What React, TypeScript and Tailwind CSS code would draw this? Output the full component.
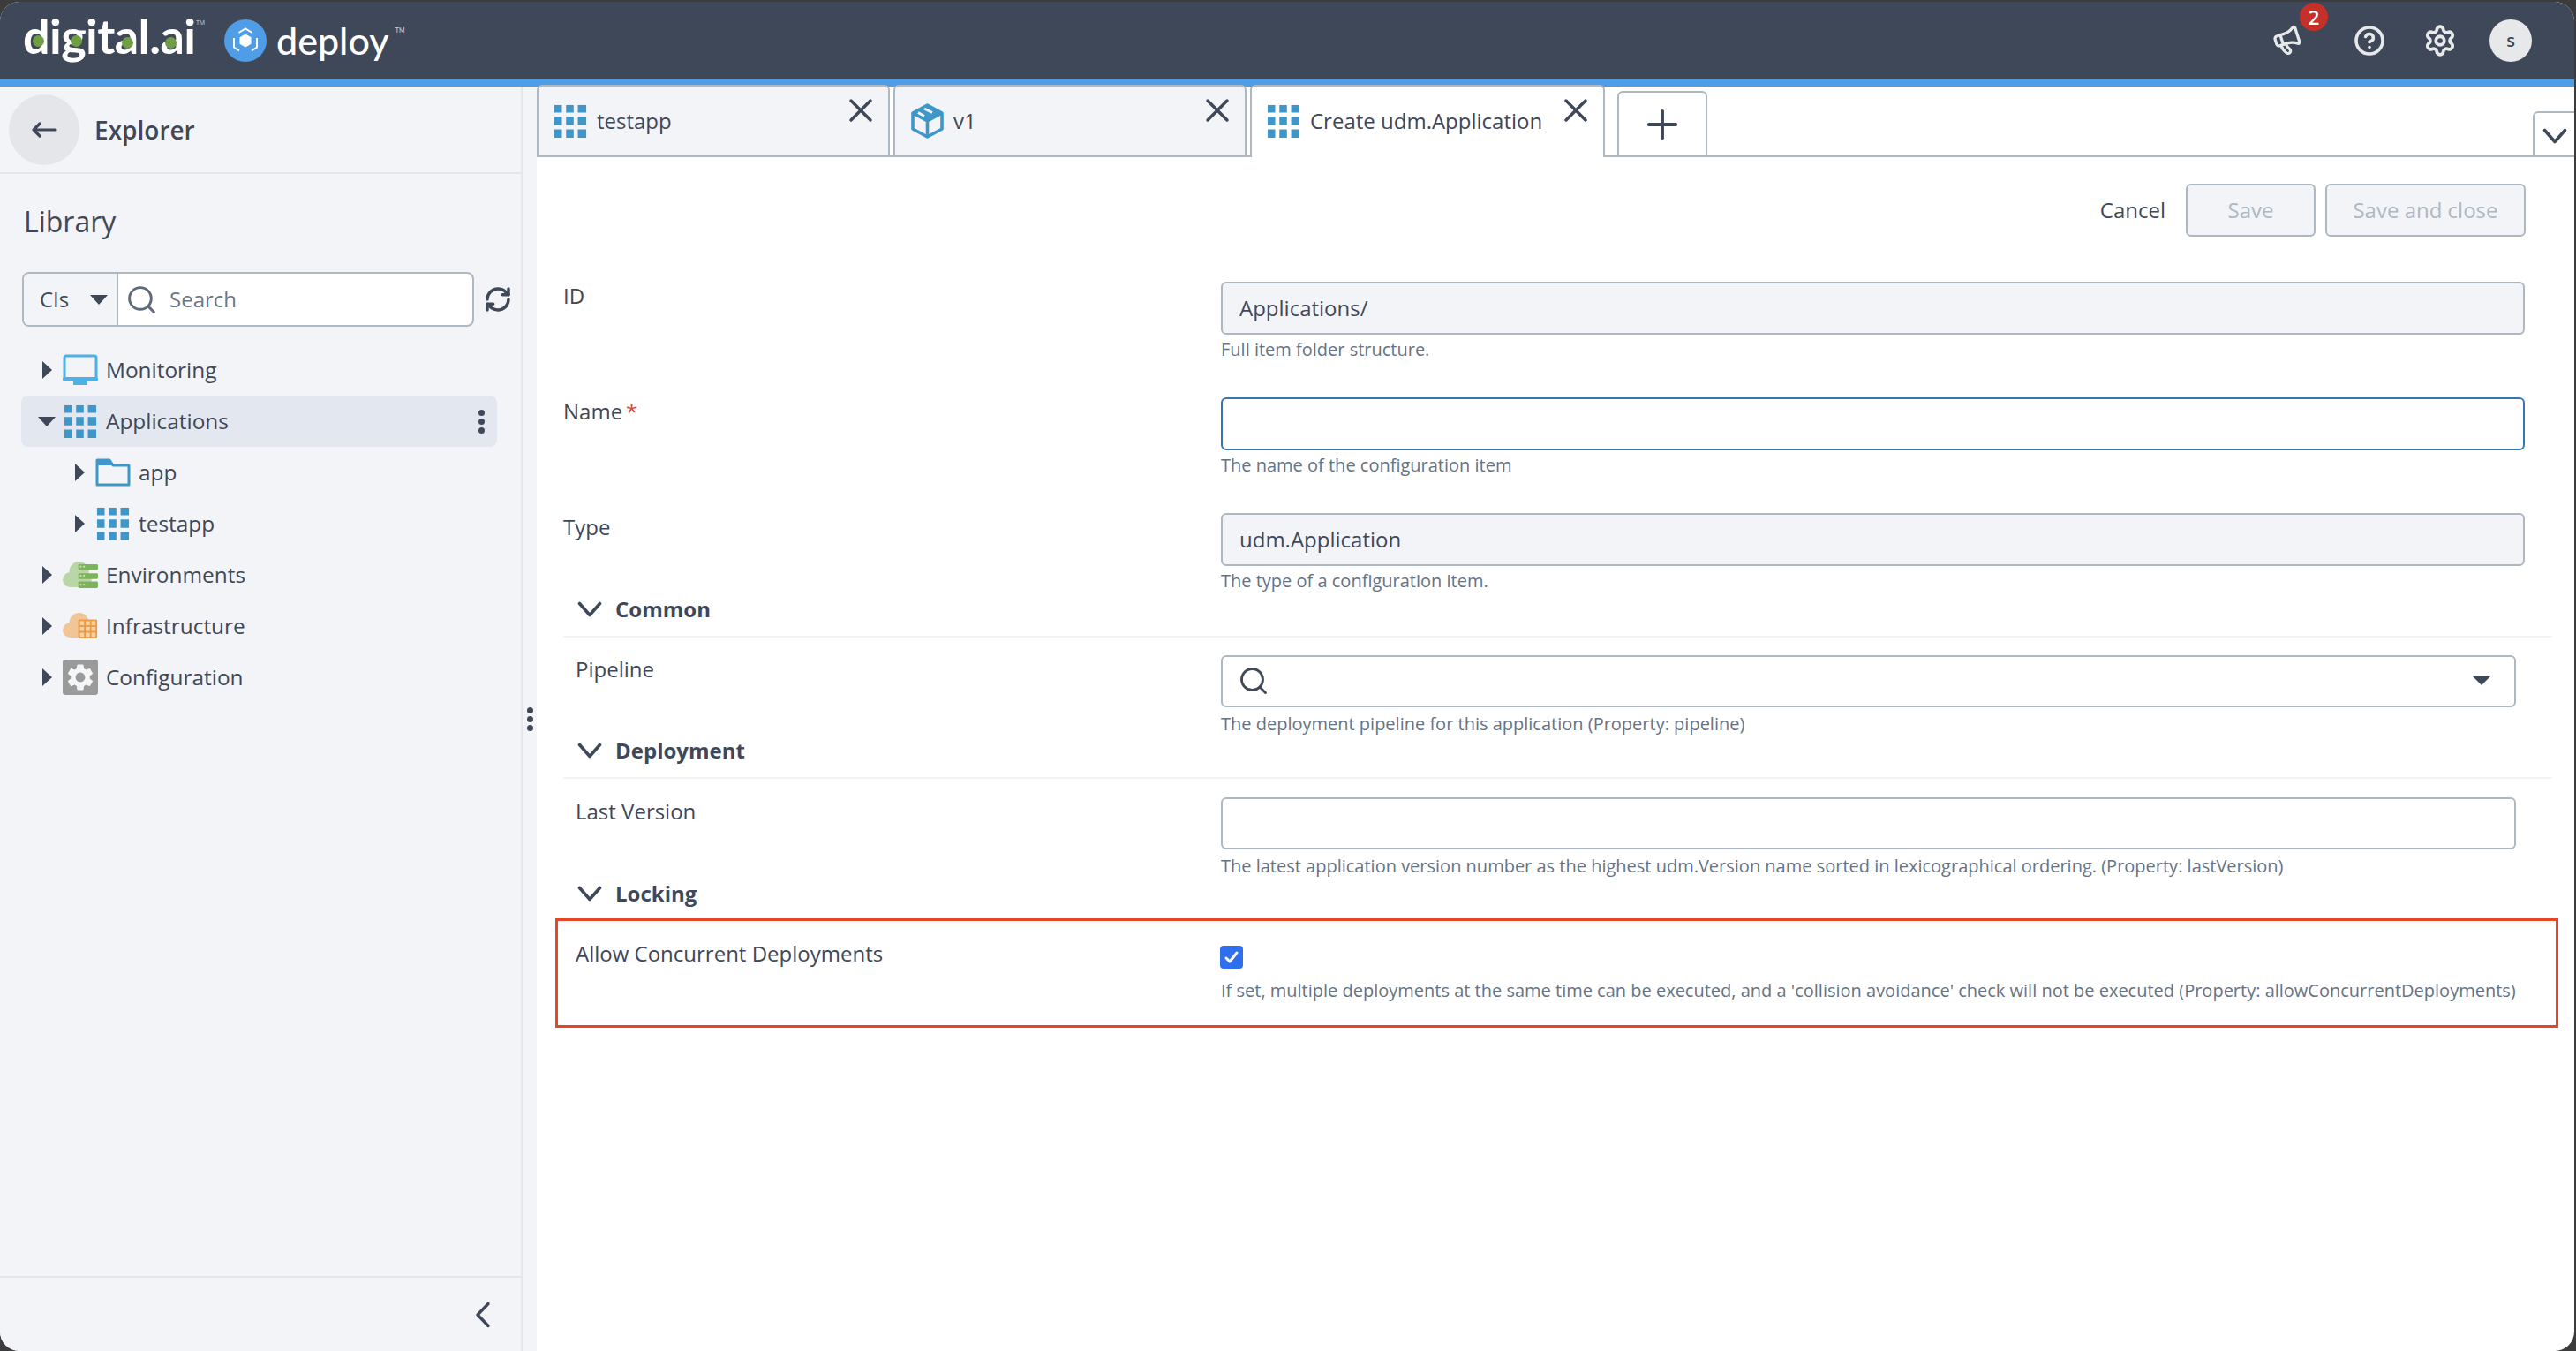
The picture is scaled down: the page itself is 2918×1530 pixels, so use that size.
import { CircleHelp, Megaphone, Plus, RefreshCw, Search, Settings, X } from 'lucide-react';
import { MdSettings } from 'react-icons/md';

const Grid = ({ className = '' }: { className?: string }) => (
  <svg viewBox="0 0 40 40" className={className}>
    <g fill="#3f96c8">
      <rect x="1" y="1" width="9" height="9" /><rect x="15" y="1" width="9" height="9" /><rect x="29" y="1" width="10" height="9" />
      <rect x="1" y="15" width="9" height="10" /><rect x="15" y="15" width="9" height="10" /><rect x="29" y="15" width="10" height="10" />
      <rect x="1" y="30" width="9" height="10" /><rect x="15" y="30" width="9" height="10" /><rect x="29" y="30" width="10" height="10" />
    </g>
  </svg>
);

const Caret = ({ open = false }: { open?: boolean }) =>
  open ? (
    <div className="h-0 w-0 border-x-[10px] border-t-[11px] border-x-transparent border-t-[#3f4859]" />
  ) : (
    <div className="h-0 w-0 border-y-[10px] border-l-[11px] border-y-transparent border-l-[#3f4859]" />
  );

const Chevron = ({ className = '' }: { className?: string }) => (
  <svg viewBox="0 0 28 18" className={`h-[18px] w-[28px] shrink-0 ${className}`} fill="none" stroke="#3f4859" strokeWidth="3.6" strokeLinecap="round" strokeLinejoin="round">
    <path d="M2.5 2.5 14 15.5 25.5 2.5" />
  </svg>
);

const MonitorIcon = () => (
  <svg viewBox="0 0 40 36" className="h-[36px] w-[40px]">
    <rect x="2" y="2" width="36" height="27" rx="2" fill="none" stroke="#4fb0e5" strokeWidth="3" />
    <rect x="0" y="26" width="40" height="5" rx="2" fill="#4fb0e5" />
    <rect x="12" y="31" width="16" height="4" fill="#4fb0e5" />
  </svg>
);

const FolderIcon = () => (
  <svg viewBox="0 0 40 32" className="h-[32px] w-[40px]">
    <path d="M2 30V2h14l4 6h18v22z" fill="none" stroke="#3f96c8" strokeWidth="3" strokeLinejoin="round" />
    <path d="M1 1h15l4 7H1z" fill="#3f96c8" />
  </svg>
);

const EnvIcon = () => (
  <svg viewBox="0 0 43 32" className="h-[32px] w-[43px]">
    <g fill="#b9d6a6">
      <circle cx="9" cy="22" r="9" /><circle cx="20" cy="12" r="12" /><rect x="9" y="18" width="26" height="13" />
    </g>
    <g fill="#7db45a">
      <rect x="19" y="3" width="24" height="7" rx="1.5" /><rect x="19" y="14" width="24" height="7" rx="1.5" /><rect x="19" y="24" width="24" height="8" rx="1.5" />
    </g>
    <g fill="#cfe3bf">
      <rect x="21" y="5" width="2" height="2" /><rect x="25" y="5" width="2" height="2" />
      <rect x="21" y="16" width="2" height="2" /><rect x="25" y="16" width="2" height="2" />
      <rect x="21" y="27" width="2" height="2" /><rect x="25" y="27" width="2" height="2" />
    </g>
  </svg>
);

const InfraIcon = () => (
  <svg viewBox="0 0 43 32" className="h-[32px] w-[43px]">
    <g fill="#f2c596">
      <circle cx="9" cy="21" r="9" /><circle cx="20" cy="12" r="12" /><rect x="9" y="18" width="26" height="12" />
    </g>
    <rect x="19" y="8" width="23" height="23" rx="1.5" fill="#ee9a3f" />
    <g fill="#f7d2a8">
      <rect x="21" y="10" width="5" height="5" /><rect x="28" y="10" width="5" height="5" /><rect x="35" y="10" width="5" height="5" />
      <rect x="21" y="17" width="5" height="5" /><rect x="28" y="17" width="5" height="5" /><rect x="35" y="17" width="5" height="5" />
      <rect x="21" y="24" width="5" height="5" /><rect x="28" y="24" width="5" height="5" /><rect x="35" y="24" width="5" height="5" />
    </g>
  </svg>
);

const ConfigIcon = () => (
  <div className="flex h-[40px] w-[40px] items-center justify-center rounded-[3px] bg-[#9a9a9a]">
    <MdSettings size={36} className="text-[#f5f6f8]" />
  </div>
);

const CubeIcon = () => (
  <svg viewBox="0 0 37 40" className="h-[40px] w-[37px]">
    <path d="M18.5 2 35 11 18.5 20 2 11z" fill="#3f96c8" />
    <path d="M18.5 2 35 11v18l-16.5 9L2 29V11zM2 11l16.5 9L35 11M18.5 20v18" fill="none" stroke="#3f96c8" strokeWidth="3.6" strokeLinejoin="round" />
    <path d="M8 10.5l7 4M15 6l9 4.5" fill="none" stroke="#f3f4f8" strokeWidth="3" />
  </svg>
);

const TreeRow = ({ label, icon, indent = false, open = false, active = false }: { label: string; icon: React.ReactNode; indent?: boolean; open?: boolean; active?: boolean }) => (
  <div className={`flex h-[58px] items-center rounded-[8px] ${indent ? 'pl-[61px]' : 'pl-[24px]'} ${active ? 'bg-[#e3e7ef]' : ''}`}>
    <div className={`flex justify-start ${open ? '-ml-[5px] w-[28px]' : 'w-[23px]'}`}><Caret open={open} /></div>
    <div className="flex w-[40px] shrink-0 items-center justify-center">{icon}</div>
    <span className="ml-[9px] text-[24.4px]">{label}</span>
    {active && (
      <div className="ml-auto mr-[14px] flex flex-col gap-[3px]">
        <div className="h-[7px] w-[7px] rounded-full bg-[#3f4859]" />
        <div className="h-[7px] w-[7px] rounded-full bg-[#3f4859]" />
        <div className="h-[7px] w-[7px] rounded-full bg-[#3f4859]" />
      </div>
    )}
  </div>
);

const Tab = ({ label, icon, active = false, width }: { label: string; icon: React.ReactNode; active?: boolean; width: string }) => (
  <div className={`relative flex items-center rounded-t-[6px] border-x-2 border-t-2 border-[#aeb8c2] pl-[15px] ${width} ${active ? '-mb-[2px] h-[82px] bg-white pb-[2px]' : 'h-[80px] bg-[#f3f4f8]'}`}>
    <div className="flex w-[42px] shrink-0 justify-center">{icon}</div>
    <span className="ml-[9px] text-[24px]">{label}</span>
    <X size={44} strokeWidth={1.9} className="absolute right-[9px] top-[5px] text-[#3f4859]" />
  </div>
);

const Field = ({ label, help, value, required, gray, focus }: { label: string; help: string; value?: string; required?: boolean; gray?: boolean; focus?: boolean }) => (
  <div className="flex h-[131px]">
    <div className="w-[745px] shrink-0 text-[24px] leading-[32px]">
      {label}
      {required && <span className="ml-[4px] text-[#e0453a]">*</span>}
    </div>
    <div className="w-[1477px]">
      <input
        readOnly
        value={value ?? ''}
        className={`h-[60px] w-full rounded-[6px] border-2 px-[19px] pb-[2px] text-[24px] text-[#3f4859] outline-none ${focus ? 'border-[#3375b5]' : 'border-[#aeb8c2]'} ${gray ? 'bg-[#f3f4f8]' : 'bg-white'}`}
      />
      <div className="mt-[3px] text-[20px] leading-[28px] text-[#667385]">{help}</div>
    </div>
  </div>
);

const SectionTitle = ({ title, line = true }: { title: string; line?: boolean }) => (
  <div className={`flex items-center pl-[16px] ${line ? 'h-[53px] border-b-2 border-[#f3f4f8] pb-[9px]' : 'h-[51px] pb-[5px]'}`}>
    <Chevron />
    <span className="ml-[15px] text-[24px] font-bold">{title}</span>
  </div>
);

const App = () => {
  return (
    <div className="h-[1530px] w-[2918px] overflow-hidden bg-[#3c3c3c] font-['Open_Sans',sans-serif] text-[#3f4859]">
      <div className="mt-[2px] flex h-[1528px] w-[2916px] flex-col overflow-hidden rounded-[22px] bg-white">
        <header className="flex h-[88px] shrink-0 items-center bg-[#3f4859] pl-[26px] pr-[48px]">
          <div className="relative h-[60px] w-[210px]">
            <span className="absolute left-0 top-[-5px] font-['Lato',sans-serif] text-[54px] font-bold leading-[60px] tracking-[-0.6px] text-white">digital.ai</span>
            <div className="absolute left-[11px] top-[24px] h-[13px] w-[13px] rounded-full bg-[#6f9e45]" />
            <div className="absolute left-[54px] top-[24px] h-[13px] w-[13px] rounded-full bg-[#6f9e45]" />
            <div className="absolute left-[112px] top-[26px] h-[13px] w-[13px] rounded-full bg-[#6f9e45]" />
            <div className="absolute left-[161px] top-[26px] h-[13px] w-[13px] rounded-full bg-[#6f9e45]" />
            <span className="absolute left-[196px] top-[6px] text-[7px] leading-[8px] text-[#cfd3da]">TM</span>
          </div>
          <svg viewBox="0 0 48 48" className="ml-[18px] h-[48px] w-[48px] shrink-0">
            <circle cx="24" cy="24" r="24" fill="#4f9de6" />
            <path d="M24 16.5l6.5 3.7v7.6L24 31.5l-6.5-3.7v-7.6z" fill="#fff" />
            <path d="M16.5 15l7.5-4.5 7.5 4.5M11 21v10.5l6 4M37 21v10.5l-6 4" fill="none" stroke="#fff" strokeWidth="2" />
          </svg>
          <span className="relative ml-[11px] font-['Lato',sans-serif] text-[43px] font-medium leading-[48px] text-white">
            deploy
            <span className="absolute -right-[18px] top-[8px] text-[7px] leading-[8px] text-[#cfd3da]">TM</span>
          </span>
          <div className="relative ml-auto">
            <Megaphone size={34} strokeWidth={2.3} className="-rotate-[18deg] text-[#e7e8ea]" />
            <div className="absolute -right-[29px] -top-[26px] flex h-[32px] w-[32px] items-center justify-center rounded-full bg-[#c5302a] text-[22px] font-semibold leading-none text-white">2</div>
          </div>
          <CircleHelp size={36} strokeWidth={2.4} className="ml-[58px] text-[#e7e8ea]" />
          <Settings size={38} strokeWidth={2.4} className="ml-[43px] text-[#e7e8ea]" />
          <div className="ml-[37px] flex h-[48px] w-[48px] items-center justify-center rounded-full bg-[#e7e8ea] text-[20px] font-semibold text-[#3f4859]">s</div>
        </header>
        <div className="h-[8px] shrink-0 bg-[#4f9de6]" />

        <div className="flex min-h-0 flex-1">
          <aside className="flex w-[592px] shrink-0 flex-col border-r-2 border-[#e4e6ea] bg-[#f3f4f7]">
            <div className="flex h-[99px] shrink-0 items-center border-b-2 border-[#e4e6ea] pl-[10px]">
              <div className="flex h-[80px] w-[80px] items-center justify-center rounded-full bg-[#e4e6ea]">
                <svg viewBox="0 0 30 20" className="h-[20px] w-[30px]" fill="none" stroke="#3f4859" strokeWidth="3.2" strokeLinecap="round" strokeLinejoin="round">
                  <path d="M28 10H3M10 3l-7 7 7 7" />
                </svg>
              </div>
              <span className="ml-[17px] text-[28px] font-semibold">Explorer</span>
            </div>
            <div className="px-[25px]">
              <div className="pl-[2px] pt-[34px] text-[32px] leading-[40px]">Library</div>
              <div className="mt-[37px] flex items-center">
                <div className="flex h-[62px] w-[512px] shrink-0 rounded-[8px] border-2 border-[#aeb8c2] bg-white">
                  <div className="flex w-[107px] items-center justify-between rounded-l-[6px] border-r-2 border-[#aeb8c2] bg-[#f3f4f7] pl-[18px] pr-[10px] text-[24px]">
                    CIs
                    <div className="h-0 w-0 border-x-[10px] border-t-[11px] border-x-transparent border-t-[#3f4859]" />
                  </div>
                  <div className="flex flex-1 items-center pl-[8px] text-[24px] text-[#6a7785]">
                    <Search size={37} strokeWidth={1.9} className="text-[#5f6b79]" />
                    <span className="ml-[13px]">Search</span>
                  </div>
                </div>
                <RefreshCw size={32} strokeWidth={2.6} className="ml-[11px] shrink-0 text-[#3f4859]" />
              </div>
              <div className="-ml-[1px] mr-[2px] mt-[20px]">
                <TreeRow label="Monitoring" icon={<MonitorIcon />} />
                <TreeRow label="Applications" icon={<Grid className="h-[38px] w-[38px]" />} open active />
                <TreeRow label="app" icon={<FolderIcon />} indent />
                <TreeRow label="testapp" icon={<Grid className="h-[38px] w-[38px]" />} indent />
                <TreeRow label="Environments" icon={<EnvIcon />} />
                <TreeRow label="Infrastructure" icon={<InfraIcon />} />
                <TreeRow label="Configuration" icon={<ConfigIcon />} />
              </div>
            </div>
            <div className="mt-auto flex h-[85px] shrink-0 items-center justify-end border-t-2 border-[#e4e6ea] pr-[34px]">
              <svg viewBox="0 0 18 30" className="h-[30px] w-[18px]" fill="none" stroke="#3f4859" strokeWidth="3.4" strokeLinecap="round" strokeLinejoin="round">
                <path d="M15 2.5 3 15l12 12.5" />
              </svg>
            </div>
          </aside>

          <div className="flex w-[16px] shrink-0 flex-col items-center justify-center gap-[3px] bg-[#f3f4f8]">
            <div className="h-[7px] w-[7px] rounded-full bg-[#3f4859]" />
            <div className="h-[7px] w-[7px] rounded-full bg-[#3f4859]" />
            <div className="h-[7px] w-[7px] rounded-full bg-[#3f4859]" />
          </div>

          <main className="min-w-0 flex-1">
            <div className="flex h-[80px] items-end gap-[4px] border-b-2 border-[#aeb8c2]">
              <Tab label="testapp" icon={<Grid className="h-[38px] w-[40px]" />} width="w-[400px]" />
              <Tab label="v1" icon={<CubeIcon />} width="w-[400px]" />
              <Tab label="Create udm.Application" icon={<Grid className="h-[38px] w-[40px]" />} active width="w-[402px]" />
              <div className="ml-[10px] flex h-[73px] w-[102px] items-center justify-center rounded-t-[6px] border-x-2 border-t-2 border-[#aeb8c2] bg-white">
                <Plus size={52} strokeWidth={1.8} className="text-[#3f4859]" />
              </div>
              <div className="ml-auto flex h-[50px] w-[47px] items-center justify-center rounded-tl-[6px] border-l-2 border-t-2 border-[#aeb8c2] pt-[3px]">
                <Chevron />
              </div>
            </div>

            <div className="pl-[30px] pr-[25px]">
              <div className="flex items-center justify-end gap-[11px] pr-[30px] pt-[30px]">
                <span className="mr-[12px] text-[24px]">Cancel</span>
                <div className="flex h-[60px] w-[147px] items-center justify-center rounded-[6px] border-2 border-[#aeb8c2] bg-[#f3f4f8] text-[24px] text-[#aeb8c2]">Save</div>
                <div className="flex h-[60px] w-[227px] items-center justify-center rounded-[6px] border-2 border-[#aeb8c2] bg-[#f3f4f8] text-[24px] text-[#aeb8c2]">Save and close</div>
              </div>
              <div className="mt-[51px]">
                <Field label="ID" value="Applications/" help="Full item folder structure." gray />
                <Field label="Name" required help="The name of the configuration item" focus />
                <div className="h-[88px] overflow-visible">
                  <Field label="Type" value="udm.Application" help="The type of a configuration item." gray />
                </div>
              </div>

              <SectionTitle title="Common" />
              <div className="flex h-[107px] pl-[14px] pt-[20px]">
                <div className="w-[731px] shrink-0 text-[24px] leading-[32px]">Pipeline</div>
                <div className="w-[1467px]">
                  <div className="flex h-[59px] items-center justify-between rounded-[6px] border-2 border-[#aeb8c2] bg-white pb-[2px] pl-[17px] pr-[26px]">
                    <Search size={36} strokeWidth={1.9} className="text-[#3f4859]" />
                    <div className="h-0 w-0 border-x-[11px] border-t-[11px] border-x-transparent border-t-[#3f4859]" />
                  </div>
                  <div className="mt-[5px] text-[20px] leading-[28px] text-[#667385]">The deployment pipeline for this application (Property: pipeline)</div>
                </div>
              </div>

              <SectionTitle title="Deployment" />
              <div className="flex h-[107px] pl-[14px] pt-[21px]">
                <div className="w-[731px] shrink-0 text-[24px] leading-[32px]">Last Version</div>
                <div className="w-[1467px]">
                  <div className="h-[59px] rounded-[6px] border-2 border-[#aeb8c2] bg-white" />
                  <div className="mt-[5px] text-[20px] leading-[28px] text-[#667385]">The latest application version number as the highest udm.Version name sorted in lexicographical ordering. (Property: lastVersion)</div>
                </div>
              </div>

              <SectionTitle title="Locking" line={false} />
              <div className="-ml-[9px] flex h-[124px] w-[2269px] border-[3px] border-[#ea4427] pl-[20px] pt-[21px]">
                <div className="w-[730px] shrink-0 text-[24px] leading-[32px]">Allow Concurrent Deployments</div>
                <div>
                  <div className="mt-[7px] flex h-[26px] w-[26px] items-center justify-center rounded-[4px] bg-[#2f6fed]">
                    <svg viewBox="0 0 20 20" className="h-[20px] w-[20px]" fill="none" stroke="#fff" strokeWidth="3" strokeLinecap="round" strokeLinejoin="round">
                      <path d="M4 11l4 4 8-10" />
                    </svg>
                  </div>
                  <div className="ml-[1px] mt-[11px] whitespace-nowrap text-[20px] leading-[28px] text-[#667385]">If set, multiple deployments at the same time can be executed, and a 'collision avoidance' check will not be executed (Property: allowConcurrentDeployments)</div>
                </div>
              </div>
            </div>
          </main>
        </div>
      </div>
    </div>
  );
};

export default App;
